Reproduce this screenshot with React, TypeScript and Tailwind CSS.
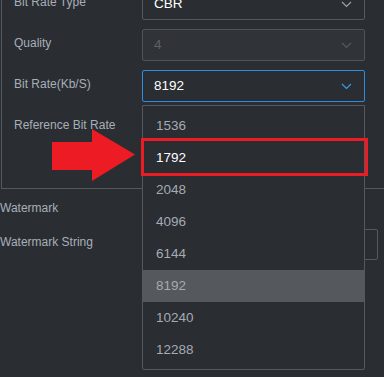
import React from 'react';

const Chevron = ({ color }: { color: string }) => (
  <svg width="11" height="7" viewBox="0 0 11 7" className="shrink-0">
    <polyline points="1,1 5.5,5.5 10,1" fill="none" stroke={color} strokeWidth="1.2" />
  </svg>
);

const Select = ({
  value,
  disabled,
  active,
}: {
  value: string;
  disabled?: boolean;
  active?: boolean;
}) => (
  <div
    className={`w-[223px] h-[32px] shrink-0 rounded-[2px] border flex items-center justify-between pl-[11px] pr-[12px] text-[13.5px] ${
      active
        ? 'border-[#2d8ee0] bg-[#2a2d32] text-white'
        : disabled
        ? 'border-[#505357] bg-[#303337] text-[#5d6166]'
        : 'border-[#55585c] bg-[#2a2d32] text-white'
    }`}
  >
    <span>{value}</span>
    <Chevron color={active ? '#3a9be6' : disabled ? '#55595e' : '#9aa1a9'} />
  </div>
);

const Row = ({ label, children }: { label: string; children?: React.ReactNode }) => (
  <div className="flex items-start h-[32px]">
    <div className="w-[128px] pt-[7px] text-[12px] leading-[14px] text-[#a7afb9]">{label}</div>
    {children}
  </div>
);

const options = ['1536', '1792', '2048', '4096', '6144', '8192', '10240', '12288'];

export default function App() {
  return (
    <div
      className="relative w-[384px] h-[377px] overflow-hidden bg-[#2a2d32]"
      style={{ fontFamily: '"Liberation Sans", Arial, sans-serif' }}
    >
      <div className="mt-[-12px]">
        {/* encode settings box */}
        <div className="ml-px border-l border-b border-[#55585c] pl-[12px] pb-[45px] flex flex-col gap-[9px]">
          <Row label="Bit Rate Type">
            <Select value="CBR" />
          </Row>
          <Row label="Quality">
            <Select value="4" disabled />
          </Row>
          <Row label="Bit Rate(Kb/S)">
            <Select value="8192" active />
          </Row>
          <Row label="Reference Bit Rate">
            <Select value="" />
          </Row>
        </div>

        <div className="flex items-start h-[35px] mt-[5px]">
          <div className="w-[142px] pt-[7px] text-[12px] leading-[14px] text-[#a7afb9]">Watermark</div>
        </div>
        <div className="flex items-start h-[31px]">
          <div className="w-[142px] pt-[6px] text-[12px] leading-[14px] text-[#a7afb9]">Watermark String</div>
          <div className="w-[236px] h-[31px] border border-[#55585c] rounded-[2px]" />
        </div>
      </div>

      {/* dropdown menu */}
      <div className="absolute left-[142px] top-[105px] w-[223px] border border-[#55585c] rounded-b-[2px] bg-[#2a2d32] pt-[4px] pb-[3px]">
        {options.map((o) => (
          <div
            key={o}
            className={`h-[32px] flex items-center pl-[13px] text-[13.5px] ${
              o === '8192' ? 'bg-[#55585c] text-[#a4abb4]' : o === '1792' ? 'text-white' : 'text-[#a4abb4]'
            }`}
          >
            {o}
          </div>
        ))}
      </div>

      {/* annotation */}
      <div className="absolute left-[141px] top-[138px] w-[227px] h-[38px] border-[3px] border-[#ed1c24]" />
      <svg className="absolute left-[52px] top-[129px]" width="84" height="53" viewBox="0 0 84 53">
        <polygon points="0,13 40,13 40,0 83,25.5 40,52 40,41 0,41" fill="#ed1c24" />
      </svg>
    </div>
  );
}
